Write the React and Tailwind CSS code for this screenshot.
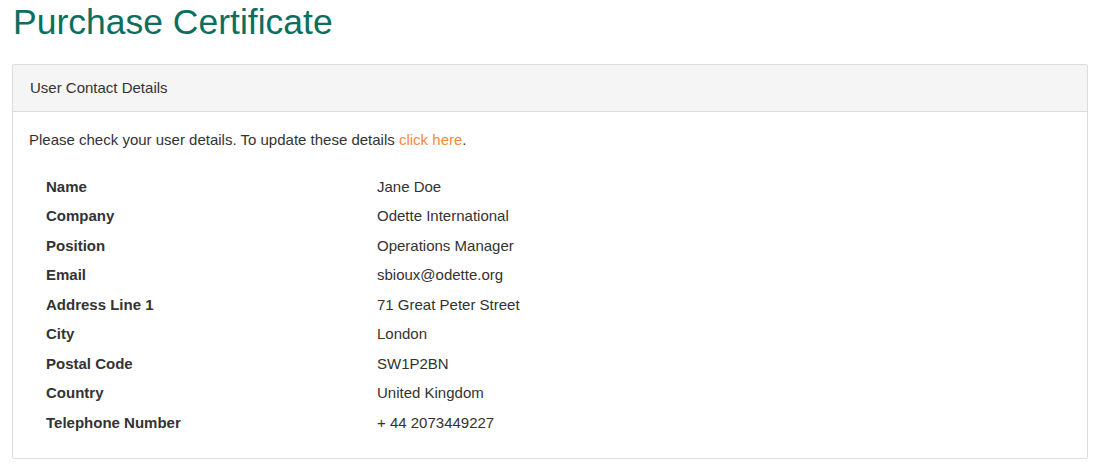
const details = [
  ['Name', 'Jane Doe'],
  ['Company', 'Odette International'],
  ['Position', 'Operations Manager'],
  ['Email', 'sbioux@odette.org'],
  ['Address Line 1', '71 Great Peter Street'],
  ['City', 'London'],
  ['Postal Code', 'SW1P2BN'],
  ['Country', 'United Kingdom'],
  ['Telephone Number', '+ 44 2073449227'],
];

export default function App() {
  return (
    <div className="min-h-[465px] bg-white pl-3 pr-[6px] font-['Liberation_Sans',Arial,sans-serif] text-[15px] text-[#333]">
      <h1 className="pl-px pt-[2px] text-[35.5px] leading-[40px] text-[#0b6e5f]">Purchase Certificate</h1>
      <div className="mt-[22px] rounded-[2px] border border-[#dddddd] bg-white">
        <div className="h-[47px] border-b border-[#dddddd] bg-[#f5f5f5] px-[17px] pt-[13px] leading-[20px]">
          User Contact Details
        </div>
        <div className="px-[16px] pb-[20px] pt-[18px]">
          <p className="leading-[20px]">
            Please check your user details. To update these details{' '}
            <a href="#" className="text-[#f58a3c]">click here</a>.
          </p>
          <table className="mt-[22px] w-full">
            <tbody>
              {details.map(([label, value]) => (
                <tr key={label} className="h-[29.5px]">
                  <td className="w-[348px] pl-[17px] font-bold leading-[20px]">{label}</td>
                  <td className="leading-[20px]">{value}</td>
                </tr>
              ))}
            </tbody>
          </table>
        </div>
      </div>
    </div>
  );
}
